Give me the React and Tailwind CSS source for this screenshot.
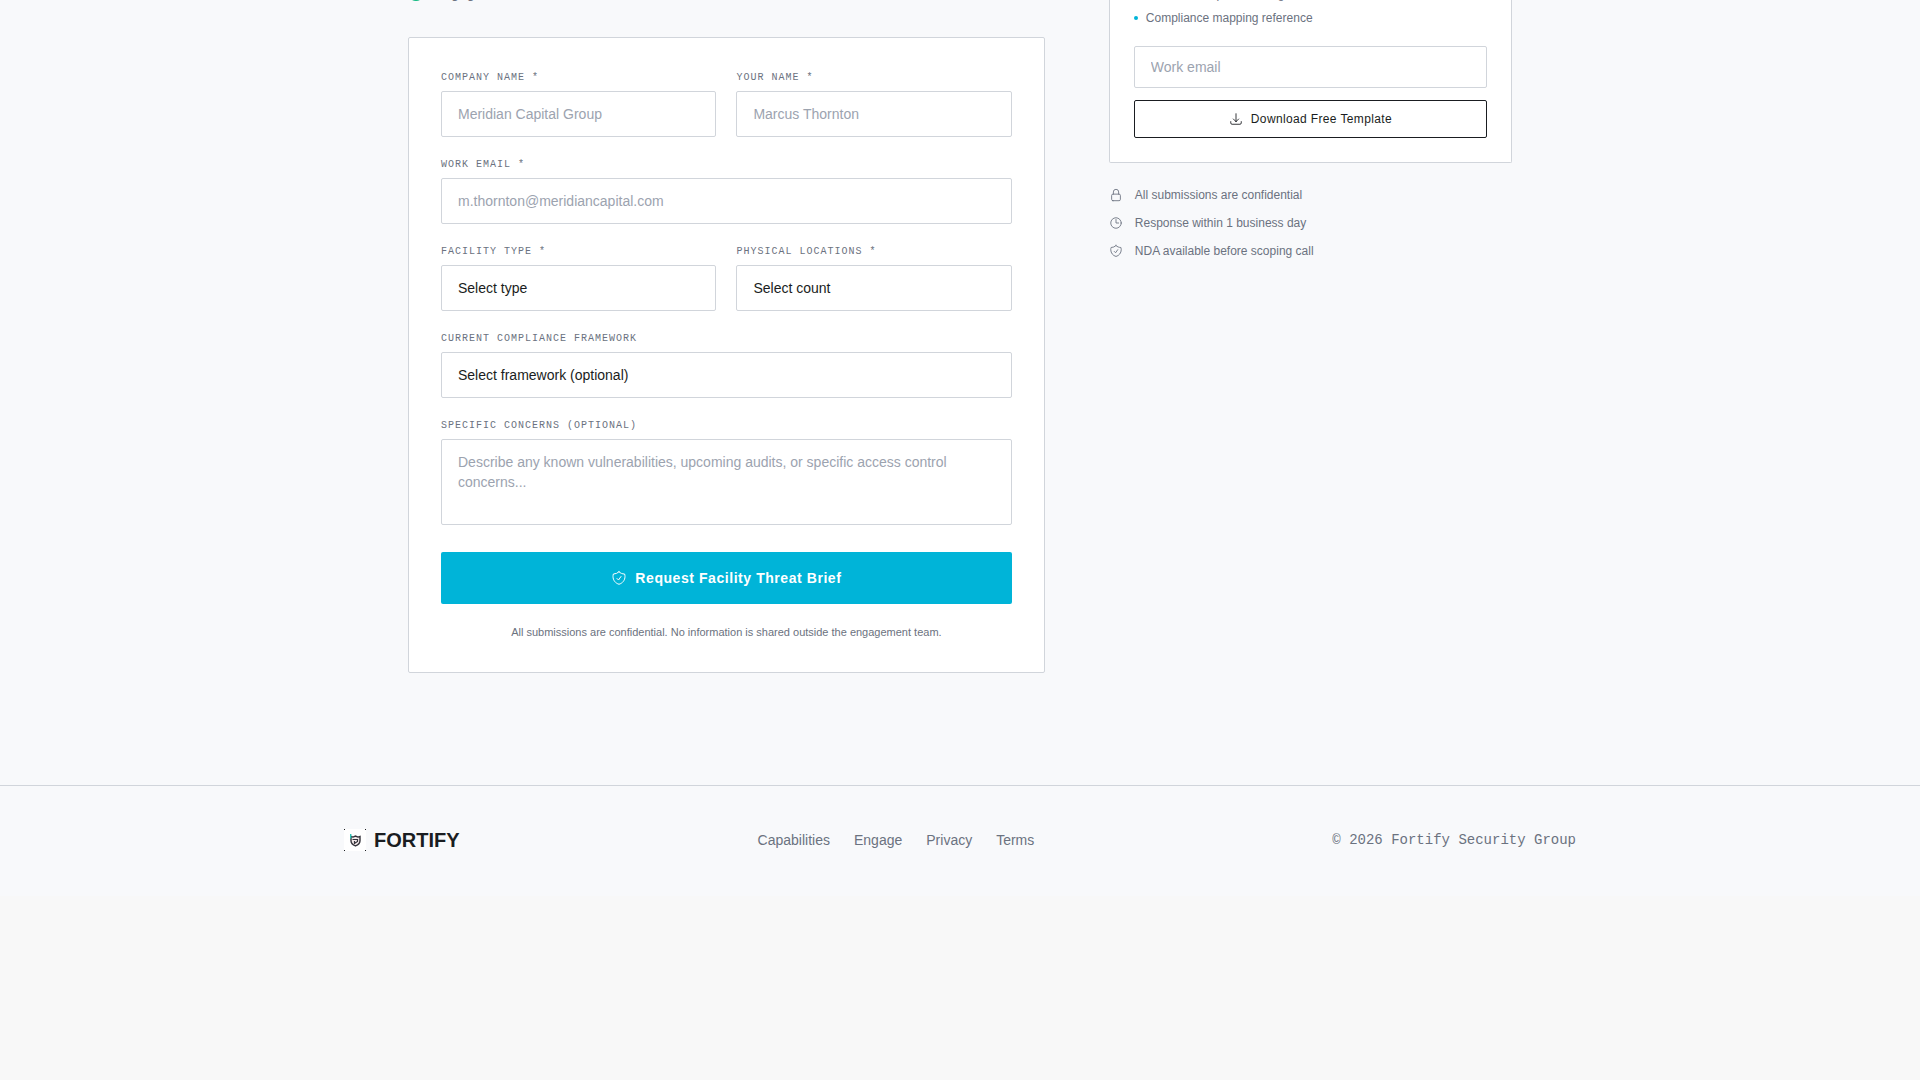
import {
  HiOutlineArrowDownTray,
  HiOutlineClock,
  HiOutlineLockClosed,
  HiOutlineShieldCheck,
} from "react-icons/hi2";

const fieldClass =
  "block w-full appearance-none rounded-xs border border-[#d1d5db] bg-white px-4 py-3 text-sm text-[#1a1d21] placeholder:text-[#9ca3af] focus:border-[#00b4d8] focus:outline-none";

const templateItems = ["Remediation plan tracking", "Compliance mapping reference"];

const assurances = [
  { icon: HiOutlineLockClosed, text: "All submissions are confidential" },
  { icon: HiOutlineClock, text: "Response within 1 business day" },
  { icon: HiOutlineShieldCheck, text: "NDA available before scoping call" },
];

const footerLinks = ["Capabilities", "Engage", "Privacy", "Terms"];

const Field = ({ id, label, children }) => (
  <div>
    <label
      htmlFor={id}
      className="mb-[6px] block font-['Liberation_Mono',monospace] text-[10px] leading-[15px] tracking-widest text-[#6b7280] uppercase"
    >
      {label}
    </label>
    {children}
  </div>
);

const SelectField = ({ id, label, options }) => (
  <Field id={id} label={label}>
    <select id={id} className={fieldClass}>
      {options.map((option) => (
        <option key={option}>{option}</option>
      ))}
    </select>
  </Field>
);

const Logo = () => (
  <a href="#top" className="flex items-center gap-2">
    <svg width="22" height="22" viewBox="0 0 22 22" aria-hidden="true">
      <rect width="22" height="22" fill="#1a1d21" />
      <path d="M1 0h20v1h1v20h-1v1H1v-1H0V1h1z" fill="#ffffff" />
      <path
        d="M7 7.500l2 .6 2.500-1 2.500 1 2-.6v4.200c0 2.400-2 4.200-4.500 5.200-2.500-1-4.500-2.800-4.500-5.200z"
        fill="#f3e9ea"
        stroke="#33323a"
        strokeWidth="1.400"
      />
      <path d="M8.500 10.500h5v2l-3 2v-2.500" fill="none" stroke="#33323a" strokeWidth="1.200" />
      <path d="M6.700 5v4.500" stroke="#2cc4b4" strokeWidth="1.400" />
    </svg>
    <span className="text-xl text-[#1a1d21] font-bold">FORTIFY</span>
  </a>
);

const BriefForm = () => (
  <form
    onSubmit={(e) => e.preventDefault()}
    className="space-y-5 rounded-xs border border-[#d1d5db] bg-white p-8"
  >
    <div className="grid grid-cols-2 gap-5">
      <Field id="company" label="Company Name *">
        <input id="company" type="text" placeholder="Meridian Capital Group" className={fieldClass} />
      </Field>
      <Field id="name" label="Your Name *">
        <input id="name" type="text" placeholder="Marcus Thornton" className={fieldClass} />
      </Field>
    </div>

    <Field id="email" label="Work Email *">
      <input id="email" type="email" placeholder="m.thornton@meridiancapital.com" className={fieldClass} />
    </Field>

    <div className="grid grid-cols-2 gap-5">
      <SelectField id="facility" label="Facility Type *" options={["Select type"]} />
      <SelectField id="locations" label="Physical Locations *" options={["Select count"]} />
    </div>

    <SelectField
      id="framework"
      label="Current Compliance Framework"
      options={["Select framework (optional)"]}
    />

    <Field id="concerns" label="Specific Concerns (Optional)">
      <textarea
        id="concerns"
        rows={3}
        placeholder="Describe any known vulnerabilities, upcoming audits, or specific access control concerns..."
        className={`${fieldClass} mb-[27px] resize-none`}
      />
    </Field>

    <button
      type="submit"
      className="flex w-full items-center justify-center gap-2 rounded-xs bg-[#00b4d8] px-6 py-4 text-sm font-bold tracking-[0.04em] text-white"
    >
      <HiOutlineShieldCheck className="size-4" />
      Request Facility Threat Brief
    </button>

    <p className="text-center text-[11px] leading-4 text-[#6b7280]">
      All submissions are confidential. No information is shared outside the engagement team.
    </p>
  </form>
);

const TemplateCard = () => (
  <form
    onSubmit={(e) => e.preventDefault()}
    className="rounded-b-xs border border-t-0 border-[#d1d5db] bg-white px-6 pb-6"
  >
    <ul className="-mt-[14px] mb-5 space-y-2">
      {templateItems.map((item) => (
        <li key={item} className="flex items-center gap-2 text-xs text-[#6b7280]">
          <span className="size-1 rounded-full bg-[#00b4d8]" />
          {item}
        </li>
      ))}
    </ul>
    <input
      type="email"
      aria-label="Work email"
      placeholder="Work email"
      className="mb-3 block w-full rounded-xs border border-[#d1d5db] bg-white px-4 py-[10px] text-sm placeholder:text-[#9ca3af] focus:outline-none"
    />
    <button
      type="submit"
      className="flex w-full items-center justify-center gap-2 rounded-xs border border-[#1a1d21] py-[10px] text-xs font-medium tracking-[0.03em] text-[#1a1d21]"
    >
      <HiOutlineArrowDownTray className="size-[14px]" />
      Download Free Template
    </button>
  </form>
);

const App = () => {
  return (
    <div id="top" className="min-h-screen overflow-hidden bg-[#f8f8f8] font-['Liberation_Sans',Arial,sans-serif]">
      <main className="bg-[#f8f9fb]">
        <div className="mx-auto grid max-w-6xl grid-cols-5 gap-16 px-6 pb-28">
          <div className="col-span-3">
            <div className="-mt-[17px] mb-[34px] flex items-center gap-[10px] text-sm text-[#6b7280]">
              <span className="size-4 rounded-full bg-[#10b981]" />
              Engagement timeline
            </div>
            <BriefForm />
          </div>

          <aside className="col-span-2">
            <TemplateCard />
            <ul className="mt-6 space-y-3">
              {assurances.map(({ icon: Icon, text }) => (
                <li key={text} className="flex items-center gap-3 text-xs text-[#6b7280]">
                  <Icon className="size-[14px]" />
                  {text}
                </li>
              ))}
            </ul>
          </aside>
        </div>
      </main>

      <footer className="border-t border-[#d1d5db] bg-[#f8f9fb]">
        <div className="mx-auto flex max-w-7xl items-center justify-between px-6 pt-10 pb-[42px]">
          <Logo />
          <nav className="flex gap-6 text-sm text-[#6b7280]">
            {footerLinks.map((link) => (
              <a key={link} href={`#${link.toLowerCase()}`}>
                {link}
              </a>
            ))}
          </nav>
          <p className="font-['Liberation_Mono',monospace] text-sm text-[#6b7280]">
            © 2026 Fortify Security Group
          </p>
        </div>
      </footer>
    </div>
  );
};

export default App;
